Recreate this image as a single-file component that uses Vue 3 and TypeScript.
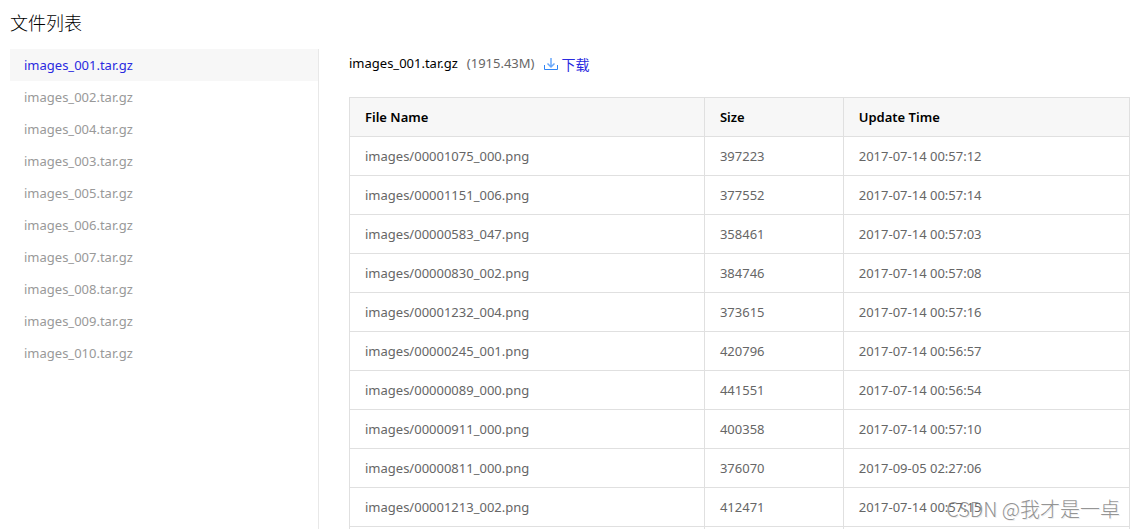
<script setup lang="ts">
import { computed, ref } from 'vue'

interface Entry {
  name: string
  size: string
  time: string
}

const archives: string[] = ['001', '002', '004', '003', '005', '006', '007', '008', '009', '010'].map(
  (n) => `images_${n}.tar.gz`,
)
const selected = ref<string>(archives[0])
const archiveSize = computed<string>(() => (selected.value === archives[0] ? '(1915.43M)' : ''))

const entries: Entry[] = [
  { name: 'images/00001075_000.png', size: '397223', time: '2017-07-14 00:57:12' },
  { name: 'images/00001151_006.png', size: '377552', time: '2017-07-14 00:57:14' },
  { name: 'images/00000583_047.png', size: '358461', time: '2017-07-14 00:57:03' },
  { name: 'images/00000830_002.png', size: '384746', time: '2017-07-14 00:57:08' },
  { name: 'images/00001232_004.png', size: '373615', time: '2017-07-14 00:57:16' },
  { name: 'images/00000245_001.png', size: '420796', time: '2017-07-14 00:56:57' },
  { name: 'images/00000089_000.png', size: '441551', time: '2017-07-14 00:56:54' },
  { name: 'images/00000911_000.png', size: '400358', time: '2017-07-14 00:57:10' },
  { name: 'images/00000811_000.png', size: '376070', time: '2017-09-05 02:27:06' },
  { name: 'images/00001213_002.png', size: '412471', time: '2017-07-14 00:57:15' },
  { name: '', size: '', time: '' },
]
</script>

<template>
  <div class="page">
    <h1 class="title">文件列表</h1>
    <div class="layout">
      <nav class="sidebar" aria-label="文件列表">
        <button
          v-for="file in archives"
          :key="file"
          type="button"
          class="file"
          :class="{ active: file === selected }"
          @click="selected = file"
        >
          {{ file }}
        </button>
      </nav>
      <main class="content">
        <div class="summary">
          <span class="name">{{ selected }}</span>
          <span class="size">{{ archiveSize }}</span>
          <a class="download" href="#download">
            <svg class="icon" viewBox="0 0 14 14" aria-hidden="true">
              <path d="M.5 8v4.500h13V8" fill="none" stroke="#2f84f5" />
              <path d="M7 1v8.500M3.500 6.500 7 10l3.500-3.500" fill="none" stroke="#6aa8fa" stroke-width="1.500" />
            </svg>
            <span>下载</span>
          </a>
        </div>
        <table class="table">
          <colgroup>
            <col class="col-name" />
            <col class="col-size" />
            <col />
          </colgroup>
          <thead>
            <tr>
              <th scope="col">File Name</th>
              <th scope="col">Size</th>
              <th scope="col">Update Time</th>
            </tr>
          </thead>
          <tbody>
            <tr v-for="(entry, i) in entries" :key="i">
              <td>{{ entry.name }}</td>
              <td>{{ entry.size }}</td>
              <td>{{ entry.time }}</td>
            </tr>
          </tbody>
        </table>
      </main>
    </div>
    <div class="watermark">CSDN @我才是一卓</div>
  </div>
</template>

<style>
body {
  margin: 0;
  background: #fff;
}
</style>

<style scoped>
.page {
  position: relative;
  display: flex;
  flex-direction: column;
  box-sizing: border-box;
  height: 100vh;
  overflow: hidden;
  padding: 7px 5px 0 10px;
  font-family: "Noto Sans", "Noto Sans CJK SC", sans-serif;
  font-size: 13px;
  color: #666;
}
.title {
  flex: none;
  margin: 0 0 12px;
  font-family: "Noto Sans CJK SC", sans-serif;
  font-size: 18px;
  font-weight: 300;
  line-height: 30px;
  color: #000;
}
.layout {
  display: flex;
  flex: 1;
  gap: 30px;
  min-height: 0;
}
.sidebar {
  flex: none;
  box-sizing: border-box;
  width: 309px;
  border-right: 1px solid #e8e8e8;
}
.file {
  display: block;
  width: 100%;
  height: 32px;
  padding: 0 14px;
  border: 0;
  background: none;
  font: inherit;
  line-height: 32px;
  text-align: left;
  color: #999;
  cursor: pointer;
}
.file.active {
  background: #f7f7f7;
  color: #2a2ae0;
}
.content {
  flex: 1;
  min-width: 0;
}
.summary {
  display: flex;
  align-items: center;
  gap: 9px;
  height: 28px;
  margin-bottom: 20px;
}
.name {
  color: #000;
}
.download {
  display: flex;
  align-items: center;
  gap: 4px;
  padding-top: 2px;
  font-family: "Noto Sans CJK SC", sans-serif;
  font-size: 14px;
  color: #2a2ae0;
  text-decoration: none;
}
.icon {
  width: 14px;
  height: 14px;
}
.table {
  width: 100%;
  table-layout: fixed;
  border-collapse: collapse;
}
.col-name {
  width: 45.5%;
}
.col-size {
  width: 17.8%;
}
th,
td {
  height: 38px;
  padding: 0 15px;
  border: 1px solid #e0e0e0;
  text-align: left;
  font-weight: 400;
}
th {
  background: #f7f7f7;
  font-weight: 600;
  color: #000;
}
.watermark {
  position: absolute;
  right: 15px;
  bottom: 5px;
  font-family: "Noto Sans CJK SC", sans-serif;
  font-size: 20px;
  font-weight: 300;
  line-height: 30px;
  color: rgba(120, 120, 120, 0.8);
  text-shadow: 1px 1px 0 rgba(160, 160, 160, 0.2);
  pointer-events: none;
}
</style>
